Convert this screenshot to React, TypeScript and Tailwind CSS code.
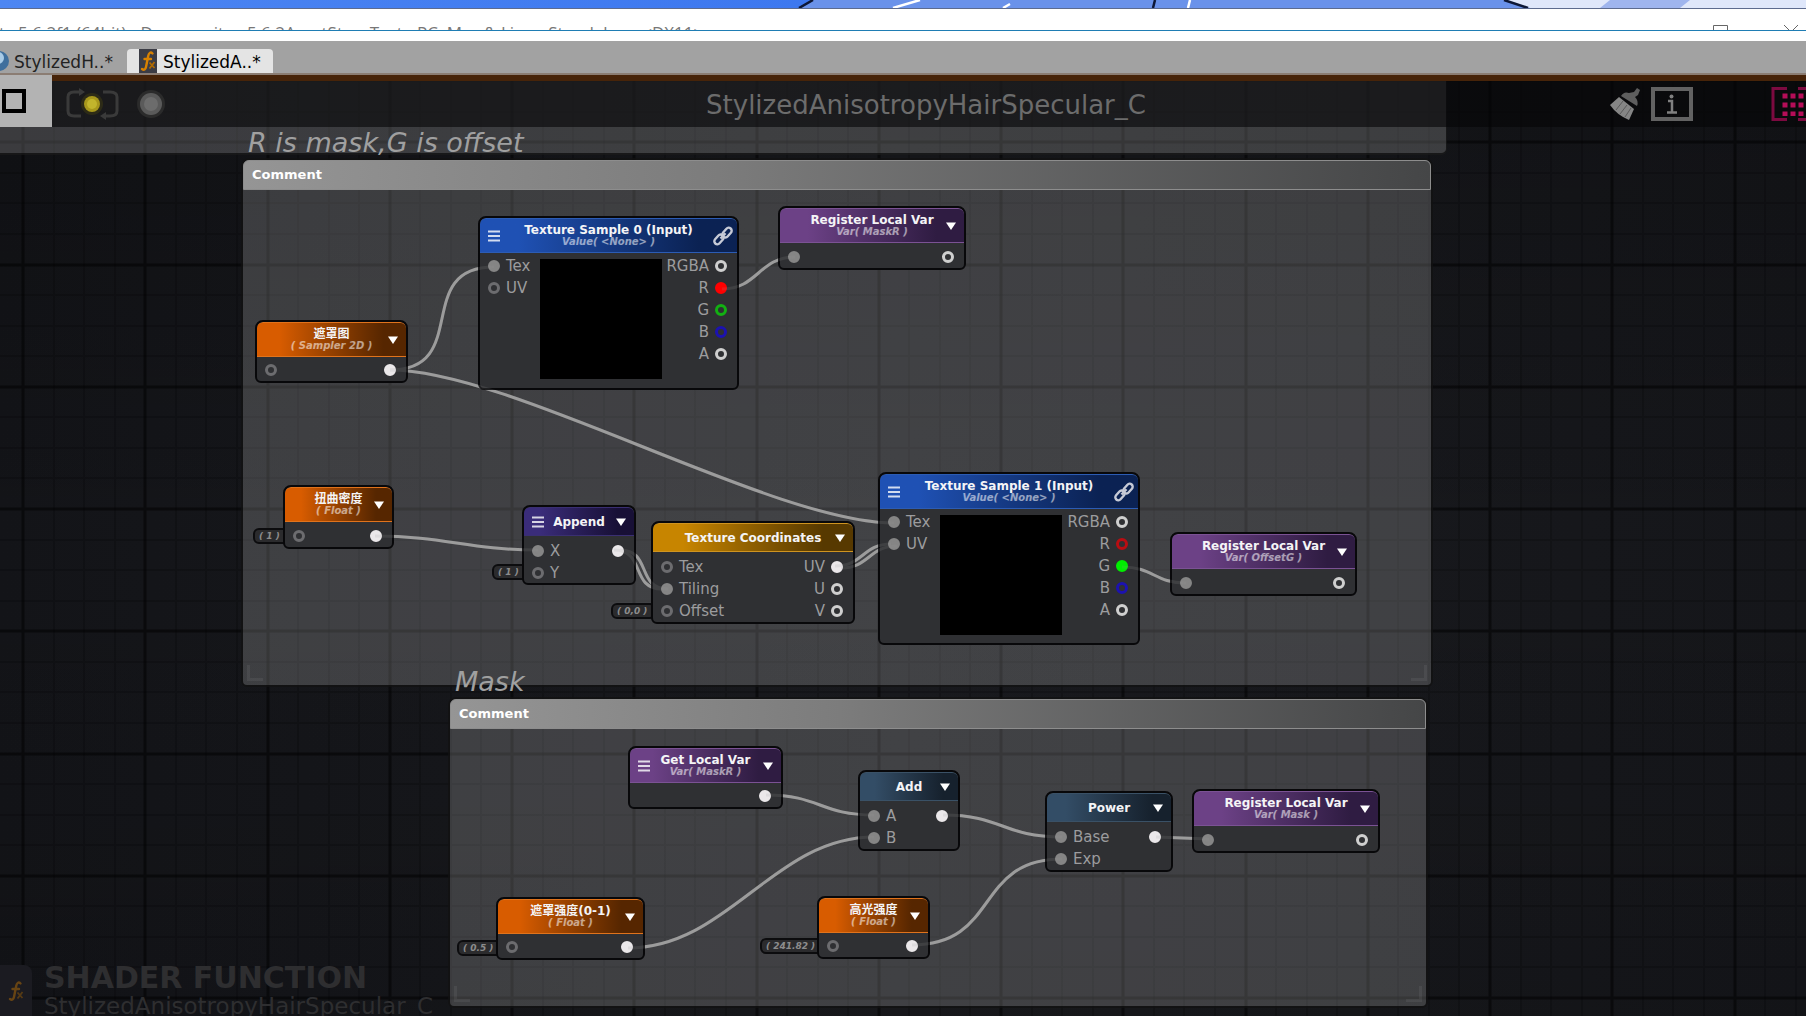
import React from "react";

type Tone = "white" | "gray" | "red" | "green" | "blue";

type Port = { label?: string; tone?: Tone; filled?: boolean };

type NodeData = {
  id: string;
  x: number;
  y: number;
  w: number;
  h: number;
  theme: keyof typeof THEMES;
  title: string;
  subtitle?: string;
  menu?: boolean;
  link?: boolean;
  preview?: boolean;
  inputs: Port[];
  outputs: Port[];
};

const THEMES = {
  orange: "from-[#d85c00] to-[#562600] border-[#e0731c]",
  blue: "from-[#1f51b4] to-[#0b2253] border-[#2c5cb4]",
  purple: "from-[#6c4186] to-[#2f1c42] border-[#7b5294]",
  indigo: "from-[#3a2c7a] to-[#181036] border-[#3a2f72]",
  gold: "from-[#c78500] to-[#573900] border-[#cf9420]",
  steel: "from-[#334d66] to-[#16212d] border-[#3a5166]",
};

const FILLED: Record<Tone, string> = {
  white: "border-[#ebe8ea] bg-[#ebe8ea]",
  gray: "border-[#858585] bg-[#858585]",
  red: "border-[#ff0000] bg-[#ff0000]",
  green: "border-[#00ee00] bg-[#00ee00]",
  blue: "border-[#1a10c0] bg-[#1a10c0]",
};

const HOLLOW: Record<Tone, string> = {
  white: "border-[#cfcfcf]",
  gray: "border-[#6c6c6f]",
  red: "border-[#b80d12]",
  green: "border-[#12b012]",
  blue: "border-[#1c12b0]",
};

const sampleOutputs = (active: string): Port[] => [
  { label: "RGBA", tone: "white" },
  { label: "R", tone: "red", filled: active === "R" },
  { label: "G", tone: "green", filled: active === "G" },
  { label: "B", tone: "blue" },
  { label: "A", tone: "white" },
];

const NODES: NodeData[] = [
  { id: "mask-sampler", x: 255, y: 245, w: 153, h: 63, theme: "orange", title: "遮罩图", subtitle: "( Sampler 2D )", inputs: [{}], outputs: [{ filled: true }] },
  { id: "sample0", x: 478, y: 141, w: 261, h: 174, theme: "blue", title: "Texture Sample 0 (Input)", subtitle: "Value( <None> )", menu: true, link: true, preview: true, inputs: [{ label: "Tex", filled: true }, { label: "UV" }], outputs: sampleOutputs("R") },
  { id: "reg-maskr", x: 778, y: 131, w: 188, h: 64, theme: "purple", title: "Register Local Var", subtitle: "Var( MaskR )", inputs: [{ filled: true }], outputs: [{}] },
  { id: "twist", x: 283, y: 410, w: 111, h: 64, theme: "orange", title: "扭曲密度", subtitle: "( Float )", inputs: [{}], outputs: [{ filled: true }] },
  { id: "append", x: 522, y: 430, w: 114, h: 80, theme: "indigo", title: "Append", menu: true, inputs: [{ label: "X", filled: true }, { label: "Y" }], outputs: [{ filled: true }] },
  { id: "texcoord", x: 651, y: 446, w: 204, h: 103, theme: "gold", title: "Texture Coordinates", inputs: [{ label: "Tex" }, { label: "Tiling", filled: true }, { label: "Offset" }], outputs: [{ label: "UV", filled: true }, { label: "U" }, { label: "V" }] },
  { id: "sample1", x: 878, y: 397, w: 262, h: 173, theme: "blue", title: "Texture Sample 1 (Input)", subtitle: "Value( <None> )", menu: true, link: true, preview: true, inputs: [{ label: "Tex", filled: true }, { label: "UV", filled: true }], outputs: sampleOutputs("G") },
  { id: "reg-offsetg", x: 1170, y: 457, w: 187, h: 64, theme: "purple", title: "Register Local Var", subtitle: "Var( OffsetG )", inputs: [{ filled: true }], outputs: [{}] },
  { id: "get-maskr", x: 628, y: 671, w: 155, h: 63, theme: "purple", title: "Get Local Var", subtitle: "Var( MaskR )", menu: true, inputs: [], outputs: [{ filled: true }] },
  { id: "add", x: 858, y: 695, w: 102, h: 81, theme: "steel", title: "Add", inputs: [{ label: "A", filled: true }, { label: "B", filled: true }], outputs: [{ filled: true }] },
  { id: "power", x: 1045, y: 716, w: 128, h: 81, theme: "steel", title: "Power", inputs: [{ label: "Base", filled: true }, { label: "Exp", filled: true }], outputs: [{ filled: true }] },
  { id: "reg-mask", x: 1192, y: 714, w: 188, h: 64, theme: "purple", title: "Register Local Var", subtitle: "Var( Mask )", inputs: [{ filled: true }], outputs: [{}] },
  { id: "mask-strength", x: 496, y: 822, w: 149, h: 63, theme: "orange", title: "遮罩强度(0-1)", subtitle: "( Float )", inputs: [{}], outputs: [{ filled: true }] },
  { id: "spec-strength", x: 817, y: 821, w: 113, h: 63, theme: "orange", title: "高光强度", subtitle: "( Float )", inputs: [{}], outputs: [{ filled: true }] },
];

const CHIPS = [
  { id: "c1", x: 253, y: 453, w: 36, text: "( 1 )" },
  { id: "c2", x: 492, y: 489, w: 36, text: "( 1 )" },
  { id: "c3", x: 611, y: 528, w: 45, text: "( 0,0 )" },
  { id: "c4", x: 457, y: 865, w: 45, text: "( 0.5 )" },
  { id: "c5", x: 760, y: 863, w: 63, text: "( 241.82 )" },
];

const COMMENTS = [
  { id: "k1", x: 241, y: 83, w: 1192, h: 529, caption: "R is mask,G is offset" },
  { id: "k2", x: 448, y: 622, w: 980, h: 311, caption: "Mask" },
];

const WIRES = [
  "M390 295 C472 295 412 192 494 192",
  "M390 295 C511 295 773 448 894 448",
  "M375 461 C445 461 468 475 538 475",
  "M620 475 C652 475 636 514 668 514",
  "M614 475 C646 475 630 514 662 514",
  "M841 493 C869 493 869 471 897 471",
  "M835 491 C863 491 863 469 891 469",
  "M722 214 C758 214 759 182 795 182",
  "M1122 492 C1154 492 1154 508 1186 508",
  "M766 720 C820 720 820 740 874 740",
  "M628 873 C728 873 774 762 874 762",
  "M943 740 C1003 740 1002 762 1062 762",
  "M1156 762 L1209 764",
  "M912 870 C1000 870 974 784 1062 784",
];

function GridLines() {
  const majors: string[] = [];
  const minors: string[] = [];
  for (let i = 0; i < 120; i++) {
    const step = (i * 489) / 16;
    const lines = i % 4 === 0 ? majors : minors;
    lines.push(`M${Math.round(23 + step)} 0V3000`);
    lines.push(`M0 ${Math.round(67 - 122 + step)}H4000`);
  }
  return (
    <svg className="absolute inset-0 h-full w-full" aria-hidden="true">
      <path d={minors.join("")} stroke="#000" strokeOpacity="0.16" strokeWidth="2" fill="none" />
      <path d={majors.join("")} stroke="#000" strokeOpacity="0.5" strokeWidth="3" fill="none" />
    </svg>
  );
}

function Wires({ faint = false }: { faint?: boolean }) {
  return (
    <svg className={`pointer-events-none absolute inset-0 h-full w-full ${faint ? "opacity-15" : ""}`} aria-hidden="true">
      {WIRES.map((d) => (
        <path key={d} d={d} stroke="#9c9c9c" strokeWidth="3" fill="none" />
      ))}
    </svg>
  );
}

function Dot({ port, tone }: { port: Port; tone: Tone }) {
  return <span className={`h-3 w-3 shrink-0 rounded-full border-3 ${port.filled ? FILLED[tone] : HOLLOW[tone]}`} />;
}

function MenuIcon() {
  return (
    <svg width="12" height="12" viewBox="0 0 12 12" aria-hidden="true">
      <path d="M0 1.5H12M0 6H12M0 10.5H12" stroke="#fff" strokeOpacity="0.8" strokeWidth="2" />
    </svg>
  );
}

function LinkIcon() {
  return (
    <svg width="20" height="20" viewBox="0 0 20 20" fill="none" stroke="#c6cad6" strokeWidth="2.4" aria-hidden="true">
      <rect x="8.5" y="3.6" width="11" height="6" rx="3" transform="rotate(-48 14 6.6)" />
      <rect x="0.5" y="10.4" width="11" height="6" rx="3" transform="rotate(-48 6 13.4)" />
      <path d="M7.5 12.5L12.5 7.2" />
    </svg>
  );
}

function ArrowIcon() {
  return (
    <svg width="10" height="8" viewBox="0 0 10 8" aria-hidden="true">
      <path d="M0 0.5H10L5 8Z" fill="#fff" />
    </svg>
  );
}

function GraphNode({ node }: { node: NodeData }) {
  const single = node.inputs.length <= 1 && node.outputs.length <= 1;
  const bodyAlign = single ? "items-center pt-0.5" : node.preview ? "items-start pt-0.5" : "items-start pt-1";
  return (
    <section
      className="absolute flex flex-col overflow-hidden rounded-t-lg rounded-b-md border-2 border-[#08080a] bg-[#2f3033]"
      style={{ left: node.x, top: node.y, width: node.w, height: node.h }}
    >
      <header
        className={`flex shrink-0 items-center justify-between rounded-t-md border-y bg-linear-to-r from-15% to-85% px-2 ${THEMES[node.theme]} ${node.subtitle ? "h-[35px]" : "h-[29px]"}`}
      >
        <span className="flex w-4 shrink-0">
          {node.menu && (
            <button type="button" aria-label="Node menu">
              <MenuIcon />
            </button>
          )}
        </span>
        <div className="flex min-w-0 flex-1 flex-col items-center font-bold whitespace-nowrap">
          <h3 className="text-[12px] leading-3 text-[#f4f4f6]">{node.title}</h3>
          {node.subtitle && <p className="text-[10px] leading-3 text-white/55 italic">{node.subtitle}</p>}
        </div>
        <span className="flex w-4 shrink-0 justify-end">
          <button type="button" aria-label={node.link ? "Linked input" : "Collapse"} className={node.link ? "-mr-1 shrink-0" : ""}>
            {node.link ? <LinkIcon /> : <ArrowIcon />}
          </button>
        </span>
      </header>
      <div className={`flex flex-1 text-[15px] text-[#9c9c9e] ${bodyAlign}`}>
        <ul className={node.preview ? "w-15 pl-2" : "flex-1 pl-2"}>
          {node.inputs.map((p, i) => (
            <li key={i} className="flex h-[22px] items-center gap-1.5">
              <Dot port={p} tone="gray" />
              {p.label}
            </li>
          ))}
        </ul>
        {node.preview && <div className="mt-1 h-[120px] w-[122px] bg-black" />}
        <ul className="flex-1 pr-2.5">
          {node.outputs.map((p, i) => (
            <li key={i} className="flex h-[22px] items-center justify-end gap-1.5">
              {p.label}
              <Dot port={p} tone={p.tone ?? "white"} />
            </li>
          ))}
        </ul>
      </div>
    </section>
  );
}

function CommentBox({ box }: { box: (typeof COMMENTS)[number] }) {
  return (
    <section
      className="absolute flex flex-col rounded-t-lg rounded-b-md border-2 border-black/70 bg-white/18"
      style={{ left: box.x, top: box.y, width: box.w, height: box.h }}
    >
      <h2 className="rounded-t-md border border-[#8d8d8d] bg-linear-to-r from-[#959595] via-[#7c7c7c] via-40% to-[#454647] px-2 text-[13px] leading-7 font-bold text-white">
        Comment
      </h2>
      <div className="flex flex-1 items-end justify-between p-1">
        <span className="h-4 w-4 border-b-3 border-l-3 border-white/6" />
        <span className="h-4 w-4 border-r-3 border-b-3 border-white/6" />
      </div>
    </section>
  );
}

function FxIcon({ className }: { className?: string }) {
  return (
    <svg className={className} viewBox="0 0 18 24" fill="none" aria-hidden="true">
      <path d="M13.5 4.5C11.5 2.5 9.8 4 9.2 7L7 18C6.5 20.5 5 21.5 3 20M5.5 10H12" stroke="#d98200" strokeWidth="2.4" strokeLinecap="round" />
      <path d="M10.5 13.5L15.5 19M15.5 13L10.5 19.5" stroke="#b06a00" strokeWidth="1.8" />
    </svg>
  );
}

function Toolbar() {
  return (
    <div className="absolute inset-x-0 top-0 grid h-[52px] grid-cols-[1fr_auto_1fr] items-center border-t-6 border-[#472409] bg-[#050506]/60">
      <div className="flex h-full items-center">
        <button type="button" aria-label="Focus" className="-mt-1.5 flex h-[52px] w-[52px] items-center bg-[#b3b3b3] pl-0.5">
          <span className="h-6 w-6 border-4 border-black" />
        </button>
        <button type="button" aria-label="Live update" className="ml-3.5">
          <svg width="54" height="32" viewBox="0 0 54 32" fill="none" aria-hidden="true">
            <path d="M15 4H8Q2 4 2 9V23Q2 28 8 28H15M37 4H44Q51 4 51 9V23Q51 28 44 28H37" stroke="#3a3a3a" strokeWidth="3" />
            <path d="M13 0L19 4L13 8ZM40 24L34 28L40 32Z" fill="#3a3a3a" />
            <circle cx="26" cy="16" r="11" fill="#3a3714" opacity="0.6" />
            <circle cx="26" cy="16" r="8" fill="#a8981c" />
            <circle cx="26" cy="16" r="5" fill="#c2b52c" />
          </svg>
        </button>
        <button type="button" aria-label="Status" className="ml-4">
          <svg width="30" height="30" viewBox="0 0 30 30" aria-hidden="true">
            <circle cx="15" cy="15" r="14" fill="#2b2b2b" />
            <circle cx="15" cy="15" r="11" fill="#5a5a5a" />
            <circle cx="15" cy="15" r="7" fill="#6c6c6c" />
          </svg>
        </button>
      </div>
      <h1 className="pt-0.5 pl-[46px] text-[26px] leading-8 text-[#6c6c6c]">StylizedAnisotropyHairSpecular_C</h1>
      <div className="flex items-center justify-end">
        <button type="button" aria-label="Clean up">
          <svg width="32" height="34" viewBox="0 0 32 34" aria-hidden="true">
            <path d="M12 9Q15 4 20 6L25 5L28 1L31 3L29 8L26 10Q30 14 28 19Z" fill="#5e5e5e" />
            <path d="M10 10L25 22L20 33Q8 28 1 18Z" fill="#858585" />
            <path d="M7 23L14 14M11 27L18 18M16 30L22 21" stroke="#5a5a5a" strokeWidth="1" />
          </svg>
        </button>
        <button type="button" aria-label="Information" className="ml-2.5">
          <svg width="42" height="34" viewBox="0 0 42 34" fill="none" aria-hidden="true">
            <rect x="2" y="2" width="38" height="30" stroke="#626262" strokeWidth="4" />
            <path d="M17 14H21V25M16 25.5H26" stroke="#808080" strokeWidth="2.5" />
            <circle cx="20.5" cy="9.5" r="2" fill="#808080" />
          </svg>
        </button>
        <button type="button" aria-label="Node palette" className="ml-[78px]">
          <svg width="35" height="34" viewBox="0 0 35 34" fill="none" aria-hidden="true">
            <path d="M16 1.5H2V32.5H16M27 1.5H35M27 32.5H35" stroke="#7c0a40" strokeWidth="3" />
            <path d="M14 6.500V29M22 6.500V29M30 6.500V29" stroke="#b50d58" strokeWidth="5" strokeDasharray="5 4" />
          </svg>
        </button>
      </div>
    </div>
  );
}

export default function App() {
  return (
    <div className="flex h-screen flex-col overflow-hidden bg-white font-['DejaVu_Sans','Noto_Sans_CJK_SC',sans-serif]">
      <div className="h-[9px] shrink-0 overflow-hidden border-b border-[#5d6b8e] bg-linear-to-r from-[#4d86f2] via-[#3b76ef] to-[#7b9cf0]">
        <svg className="h-2 w-full" viewBox="0 0 1806 8" preserveAspectRatio="none" fill="none" aria-hidden="true">
          <path d="M812 0H1520L1530 8H798Z" fill="#6a92ea" />
          <path d="M1505 0H1806V8H1530Z" fill="#dfe7fa" />
          <path d="M1610 0H1690L1680 8H1600Z" fill="#9fb5ee" />
          <path d="M813 0L799 8M1155 0L1153 8M1504 0L1528 8" stroke="#0d1736" strokeWidth="2.5" />
          <path d="M920 0L893 8M1010 4L1003 8M1190 0L1188 8" stroke="#fff" strokeWidth="2.5" />
        </svg>
      </div>
      <div className="flex h-[22px] shrink-0 justify-between overflow-hidden border-b border-[#1f7db4] bg-white pt-3 font-['Open_Sans',sans-serif] text-[17px] text-[#777]">
        <span className="-ml-7 leading-6 whitespace-nowrap">Unity 5.6.2f1 (64bit) - Demo.unity - 5.6.2AssetStoreTest - PC, Mac &amp; Linux Standalone &lt;DX11&gt;</span>
        <svg className="mt-1 shrink-0" width="93" height="16" viewBox="0 0 93 16" fill="none" stroke="#666" aria-hidden="true">
          <path d="M.5 .5H14.5V14.5H.5ZM71 0L85 14M85 0L71 14" />
        </svg>
      </div>
      <div className="h-2.5 shrink-0 bg-white" />
      <nav className="flex h-[34px] shrink-0 items-end overflow-hidden border-b-2 border-[#8b7d73] bg-[#a2a2a2] text-[17px] text-[#222]">
        <button type="button" className="-ml-2 flex h-6 items-center gap-1">
          <svg width="18" height="22" viewBox="0 0 18 22" aria-hidden="true">
            <circle cx="7" cy="11" r="10" fill="#3f6f9d" />
            <circle cx="6" cy="8" r="6" fill="#a9cbe6" />
          </svg>
          <span className="pt-1">StylizedH..*</span>
        </button>
        <button type="button" className="ml-3.5 flex h-6 items-center gap-1.5 rounded-t-sm bg-[#e4e4e4] pr-3 pl-3 text-black">
          <FxIcon className="h-6 w-[18px] bg-[#3b3c45]" />
          <span className="pt-1">StylizedA..*</span>
        </button>
      </nav>
      <main className="relative flex-1 overflow-hidden bg-linear-to-r from-[#131418] via-[#191a1e] to-[#15161a]">
        <div className="absolute inset-0 bg-linear-to-b from-black/20 via-transparent via-50% to-black/10" />
        <GridLines />
        <div className="absolute top-0 left-0 h-20 w-[1447px] rounded-br-md border-r border-b-2 border-black/60 bg-white/18" />
        {COMMENTS.map((box) => (
          <CommentBox key={box.id} box={box} />
        ))}
        {COMMENTS.map((box) => (
          <p
            key={box.id}
            className="absolute text-[27px] leading-8 whitespace-nowrap text-[#a0a0a0] italic"
            style={{ left: box.x + 7, top: box.y - 31 }}
          >
            {box.caption}
          </p>
        ))}
        <Wires />
        {CHIPS.map((c) => (
          <span
            key={c.id}
            className="absolute h-4 rounded-md border-2 border-[#0c0c0e] bg-[#2b2b2d] pl-1 text-[9px] leading-3 font-bold whitespace-nowrap text-[#8c8c8c] italic"
            style={{ left: c.x, top: c.y, width: c.w }}
          >
            {c.text}
          </span>
        ))}
        {NODES.map((n) => (
          <GraphNode key={n.id} node={n} />
        ))}
        <Wires faint />
        <div className="absolute bottom-0 left-0 flex items-end text-[#2e2e30]">
          <div className="flex h-[51px] w-8 items-center justify-center rounded-tr-lg bg-[#1b1b21]">
            <FxIcon className="h-6 w-[18px] opacity-40" />
          </div>
          <div className="-mb-0.5 pl-3">
            <p className="text-[30px] leading-8 font-bold">SHADER FUNCTION</p>
            <p className="text-[23px] leading-6">StylizedAnisotropyHairSpecular_C</p>
          </div>
        </div>
        <Toolbar />
      </main>
    </div>
  );
}
